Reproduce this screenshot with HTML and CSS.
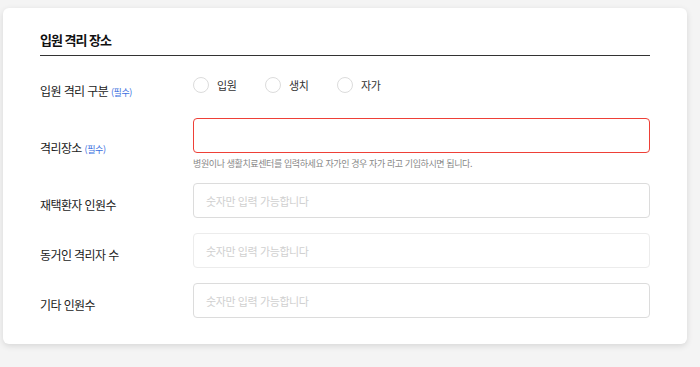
FILE: index.html
```html
<!DOCTYPE html>
<html lang="ko">
<head>
    <meta charset="UTF-8">
    <meta name="viewport" content="width=device-width, initial-scale=1.0">
    <title>입원 격리 장소</title>
    <link rel="stylesheet" href="styles.css">
</head>
<body>
    <div class="card">
        <h2 class="section-title">입원 격리 장소</h2>

        <div class="row row-radio">
            <div class="label">입원 격리 구분 <span class="required">(필수)</span></div>
            <div class="radio-group">
                <label class="radio"><span class="radio-circle"></span>입원</label>
                <label class="radio"><span class="radio-circle"></span>생치</label>
                <label class="radio"><span class="radio-circle"></span>자가</label>
            </div>
        </div>

        <div class="row row-place">
            <div class="label">격리장소 <span class="required">(필수)</span></div>
            <div class="field">
                <input type="text" class="input error">
                <p class="help">병원이나 생활치료센터를 입력하세요 자가인 경우 자가 라고 기입하시면 됩니다.</p>
            </div>
        </div>

        <div class="row">
            <div class="label">재택환자 인원수</div>
            <div class="field">
                <input type="text" class="input" placeholder="숫자만 입력 가능합니다">
            </div>
        </div>

        <div class="row">
            <div class="label">동거인 격리자 수</div>
            <div class="field">
                <input type="text" class="input light" placeholder="숫자만 입력 가능합니다">
            </div>
        </div>

        <div class="row">
            <div class="label">기타 인원수</div>
            <div class="field">
                <input type="text" class="input" placeholder="숫자만 입력 가능합니다">
            </div>
        </div>
    </div>
</body>
</html>
```

FILE: styles.css
```css
body {
    margin: 0;
    padding: 8px 13px 23px 3px;
    background-color: #f4f4f4;
    font-family: 'Noto Sans CJK KR', 'Noto Sans', sans-serif;
    color: #222;
}
.card {
    background-color: white;
    border-radius: 6px;
    padding: 22px 37px 26px;
    box-shadow: 0 2px 6px rgba(0,0,0,0.12);
}
.section-title {
    margin: 0;
    font-size: 13px;
    font-weight: bold;
    line-height: 20px;
    letter-spacing: -1px;
    color: #111;
    padding-bottom: 5px;
    border-bottom: 1px solid #333;
}
.row {
    display: grid;
    grid-template-columns: 153px 1fr;
    align-items: center;
    margin-top: 15px;
}
.label {
    font-size: 12px;
    line-height: 18px;
    padding-top: 8px;
    letter-spacing: -0.6px;
    color: #222;
}
.required {
    font-size: 9px;
    color: #3b6fe0;
    letter-spacing: -0.4px;
}
.row-radio {
    margin-top: 12px;
}
.row-radio .label {
    padding-top: 14px;
}
.row-place {
    margin-top: 16px;
}
.row-place + .row {
    margin-top: 12px;
}
.radio-group {
    display: flex;
}
.radio {
    display: flex;
    align-items: center;
    width: 72px;
    font-size: 11px;
    line-height: 16px;
    color: #333;
    letter-spacing: -0.4px;
}
.radio-circle {
    width: 14px;
    height: 14px;
    border: 1px solid #dcdcdc;
    border-radius: 50%;
    margin-right: 8px;
}
.input {
    display: block;
    box-sizing: border-box;
    width: 100%;
    height: 35px;
    padding: 0 12px;
    border: 1px solid #dcdcdc;
    border-radius: 4px;
    font-family: inherit;
    font-size: 11px;
    letter-spacing: -0.4px;
    outline: none;
}
.input::placeholder {
    color: #d0d0d0;
}
.input.light {
    border-color: #ececec;
}
.input.error {
    border-color: #ee4037;
}
.help {
    margin: 4px 0 0;
    font-size: 9px;
    line-height: 14px;
    letter-spacing: -0.4px;
    color: #888;
}
```
